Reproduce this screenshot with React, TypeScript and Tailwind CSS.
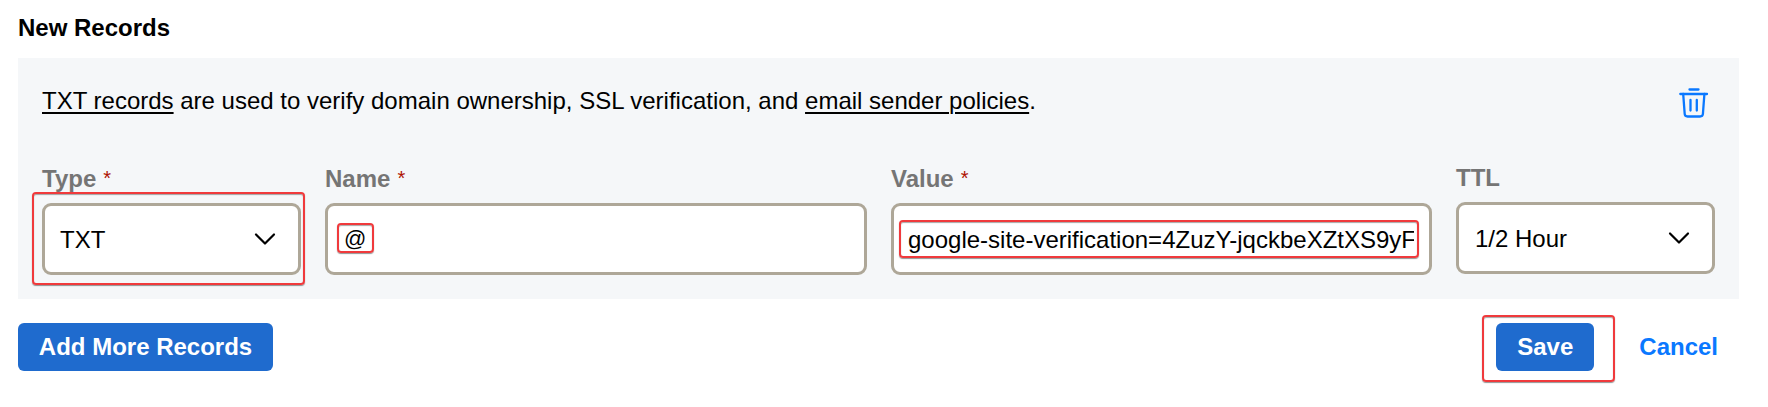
import React from "react";

const MARK =
  "pointer-events-none absolute rounded-[4px] border-2 border-[#f03a3c] shadow-[0_1px_1px_rgba(60,60,60,0.55),inset_0_1px_1px_rgba(60,60,60,0.45)]";

function Chevron() {
  return (
    <svg className="h-6 w-6 shrink-0" viewBox="0 0 24 24" fill="none" stroke="#000" strokeWidth="2.2" strokeLinecap="round" strokeLinejoin="round">
      <path d="M3 7.5l9 9 9-9" />
    </svg>
  );
}

function Label({ text, required }: { text: string; required?: boolean }) {
  return (
    <div className="flex h-7 items-center whitespace-nowrap text-2xl leading-7 font-bold text-[#757575]">
      {text}
      {required && <span className="-mt-[3px] ml-[7px] text-[20px] font-normal text-[#ae1302]">*</span>}
    </div>
  );
}

function Box({ children, className = "" }: { children: React.ReactNode; className?: string }) {
  return (
    <div className={"relative flex h-[72px] items-center rounded-[9px] border-3 border-[#aea798] bg-white text-2xl text-black " + className}>
      {children}
    </div>
  );
}

export default function App() {
  return (
    <main className="h-[407px] w-[1768px] overflow-hidden bg-white pr-[29px] pl-[18px] font-['Liberation_Sans',Arial,sans-serif] text-black">
      <h1 className="pt-[13px] text-2xl leading-[30px] font-bold">New Records</h1>
      <section className="mt-[15px] h-[241px] bg-[#f5f7f9] px-6">
        <div className="flex h-[102px] justify-between">
          <p className="pt-7 text-2xl leading-[30px] whitespace-nowrap">
            <a className="underline decoration-2 underline-offset-3">TXT records</a>
            <span> are used to verify domain ownership, SSL verification, and </span>
            <a className="underline decoration-2 underline-offset-3">email sender policies</a>.
          </p>
          <svg className="mt-7 mr-[5px] h-8 w-8" viewBox="0 0 32 32" fill="none" stroke="#0a78ff" strokeWidth="2.3" strokeLinecap="round" strokeLinejoin="round">
            <path d="M11.500 3.500H20.500" />
            <path d="M2.300 8H29" />
            <path d="M5.200 8L6.700 28Q6.900 30.500 9.500 30.500H22Q24.700 30.500 24.900 28L26.400 8" />
            <path d="M12.500 14V24.500M18.800 14V24.500" />
          </svg>
        </div>
        <div className="flex gap-6">
          <div className="w-[259px] pt-[5px]">
            <Label text="Type" required />
            <Box className="mt-[10px] justify-between pr-[21px] pl-[15px]">
              <span className="pt-px">TXT</span>
              <Chevron />
              <i className={MARK + " -top-[14px] -left-[13px] h-[93px] w-[273px]"} />
            </Box>
          </div>
          <div className="w-[542px] pt-[5px]">
            <Label text="Name" required />
            <Box className="mt-[10px] pl-[16px]">
              <span className="pb-px text-[22px]">@</span>
              <i className={MARK + " top-[17px] left-[9px] h-[30px] w-[37px]"} />
            </Box>
          </div>
          <div className="w-[541px] pt-[5px]">
            <Label text="Value" required />
            <Box className="mt-[10px] pr-[15px] pl-[14px]">
              <span className="w-full overflow-hidden pt-px whitespace-nowrap">google-site-verification=4ZuzY-jqckbeXZtXS9yF</span>
              <i className={MARK + " top-[14px] left-[5px] h-[38px] w-[520px]"} />
            </Box>
          </div>
          <div className="w-[259px] pt-[4px]">
            <Label text="TTL" />
            <Box className="mt-[10px] justify-between pr-[21px] pl-[16px]">
              <span className="pt-px">1/2 Hour</span>
              <Chevron />
            </Box>
          </div>
        </div>
      </section>
      <footer className="mt-6 flex h-12 items-center justify-between text-2xl font-bold">
        <button className="h-12 w-[255px] rounded-md bg-[#1f6bce] pb-px text-white">Add More Records</button>
        <div className="flex items-center pr-[21px]">
          <button className="relative h-12 w-[98px] rounded-md bg-[#1f6bce] pb-px text-white">
            Save
            <i className={MARK + " -top-[8px] -left-[14px] h-[67px] w-[133px]"} />
          </button>
          <button className="ml-[45px] pb-px text-[#0a78ff]">Cancel</button>
        </div>
      </footer>
    </main>
  );
}
